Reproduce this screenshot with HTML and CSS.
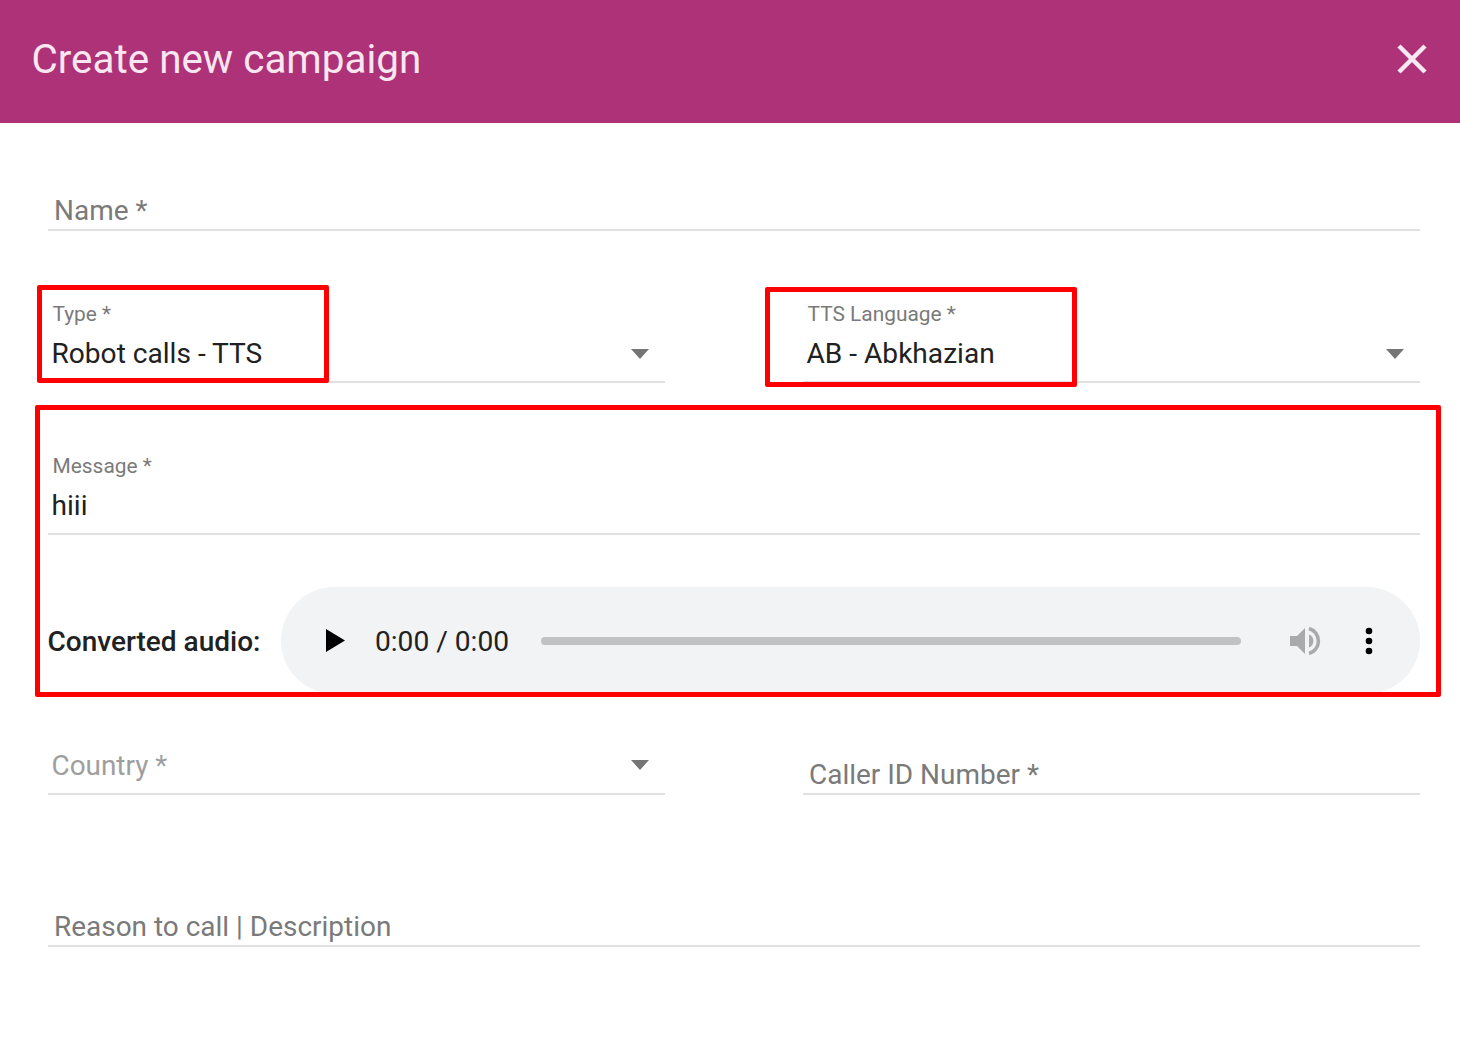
FILE: index.html
```html
<!DOCTYPE html>
<html lang="en">
<head>
<meta charset="utf-8">
<title>Create new campaign</title>
<link rel="stylesheet" href="styles.css">
</head>
<body>
<div class="dialog">
  <header class="head">
    <h1 class="title">Create new campaign</h1>
    <svg class="close" viewBox="0 0 30 30" aria-hidden="true"><path d="M2 2 L28 28 M28 2 L2 28"/></svg>
  </header>
  <main class="form">
    <div class="field name-field"><span class="placeholder">Name *</span></div>
    <div class="pair type-row">
      <div class="field select filled">
        <span class="small">Type *</span>
        <span class="value">Robot calls - TTS</span>
        <i class="caret"></i>
      </div>
      <div class="field select filled">
        <span class="small">TTS Language *</span>
        <span class="value">AB - Abkhazian</span>
        <i class="caret"></i>
      </div>
    </div>
    <div class="field message">
      <span class="small">Message *</span>
      <span class="value">hiii</span>
    </div>
    <div class="audio-row">
      <strong class="audio-label">Converted audio:</strong>
      <div class="player">
        <svg class="play" viewBox="0 0 20 24" aria-hidden="true"><path d="M0 0 L20 12 L0 24 Z"/></svg>
        <span class="time">0:00 / 0:00</span>
        <div class="track"></div>
        <svg class="volume" viewBox="0 0 32 32" aria-hidden="true"><path class="vol-fill" d="M1 11 H8 L16 3 V29 L8 21 H1 Z"/><path class="vol-fill" d="M20 9.500 A7 7 0 0 1 20 22.500 Z"/><path class="vol-line" d="M20 3.500 A13 13 0 0 1 20 28.500"/></svg>
        <svg class="more" viewBox="0 0 8 28" aria-hidden="true"><circle cx="4" cy="4" r="3.300"/><circle cx="4" cy="14" r="3.300"/><circle cx="4" cy="24" r="3.300"/></svg>
      </div>
    </div>
    <div class="pair country-row">
      <div class="field select country">
        <span class="muted">Country *</span>
        <i class="caret"></i>
      </div>
      <div class="field caller"><span class="placeholder">Caller ID Number *</span></div>
    </div>
    <div class="field reason"><span class="placeholder">Reason to call | Description</span></div>
  </main>
  <div class="mark mark-type"></div>
  <div class="mark mark-tts"></div>
  <div class="mark mark-message"></div>
</div>
</body>
</html>
```
FILE: styles.css
```css
* { box-sizing: border-box; }
html, body { margin: 0; padding: 0; background: #fff; }
body { font-family: Roboto, "Liberation Sans", sans-serif; color: #212121; }
.dialog { position: relative; width: 1460px; height: 1050px; overflow: hidden; background: #fff; }
.head { height: 123px; background: #ad3277; display: flex; align-items: center; justify-content: space-between; padding: 0 33px 5px 31.500px; }
.title { margin: 0; padding-top: 2px; font-size: 40.400px; font-weight: 400; color: #f8e6f0; line-height: 1; }
.close { width: 30px; height: 30px; fill: none; stroke: #f9e9f2; stroke-width: 4.500px; }
.form { padding: 0 40px 0 48px; display: flex; flex-direction: column; }
.field { position: relative; display: flex; flex-direction: column; justify-content: flex-end; border-bottom: 2px solid #e0e0e0; }
.pair { display: grid; grid-template-columns: 617px 617px; column-gap: 138px; }
.name-field { height: 108px; padding: 0 0 2px 6px; }
.type-row { margin-top: 56px; }
.select { height: 96px; padding-left: 3.500px; }
.filled { padding-bottom: 8px; }
.small { font-size: 20.900px; line-height: 26px; color: #7a7a7a; padding-left: 1px; margin-bottom: 10px; }
.value { font-size: 28.100px; line-height: 33px; color: #212121; height: 36px; }
.placeholder { font-size: 27.960px; line-height: 33px; color: #7a7a7a; }
.muted { font-size: 27.900px; line-height: 33px; color: #9e9e9e; margin-bottom: 11px; }
.caret { position: absolute; right: 16px; bottom: 22px; width: 0; height: 0; border-left: 9.500px solid transparent; border-right: 9.500px solid transparent; border-top: 10px solid #757575; }
.country .caret { bottom: 23px; }
.message { height: 96px; margin-top: 56px; padding: 0 0 8px 3.500px; }
.audio-row { display: flex; align-items: center; margin-top: 52px; gap: 20.500px; height: 107px; }
.audio-label { font-size: 28px; font-weight: 500; color: #212121; white-space: nowrap; padding-top: 2px; margin-left: -0.500px; }
.player { flex: 1; height: 107px; border-radius: 54px; background: #f1f3f4; display: flex; align-items: center; padding: 0 47px 0 45px; }
.play { width: 19px; height: 23px; fill: #000; flex: none; }
.time { font-size: 28.150px; color: #212121; margin-left: 30px; white-space: nowrap; padding-top: 2px; }
.track { width: 700px; height: 8px; border-radius: 4px; background: #c1c2c3; margin-left: 32px; flex: none; }
.volume { width: 32px; height: 32px; margin-left: 48px; flex: none; }
.vol-fill { fill: #a9abab; }
.vol-line { fill: none; stroke: #a9abab; stroke-width: 3.500px; }
.more { width: 8px; height: 28px; fill: #000; margin-left: 44px; flex: none; }
.country-row { margin-top: 0; }
.country { height: 101px; padding-left: 3.500px; }
.caller { height: 101px; padding: 0 0 2px 6px; }
.reason { height: 152px; padding: 0 0 2px 6px; }
.mark { position: absolute; border: 5px solid #f00; border-radius: 2px; }
.mark-type { left: 37px; top: 285px; width: 292px; height: 98px; }
.mark-tts { left: 765px; top: 287px; width: 312px; height: 100px; }
.mark-message { left: 35px; top: 405px; width: 1406px; height: 292px; }
```
